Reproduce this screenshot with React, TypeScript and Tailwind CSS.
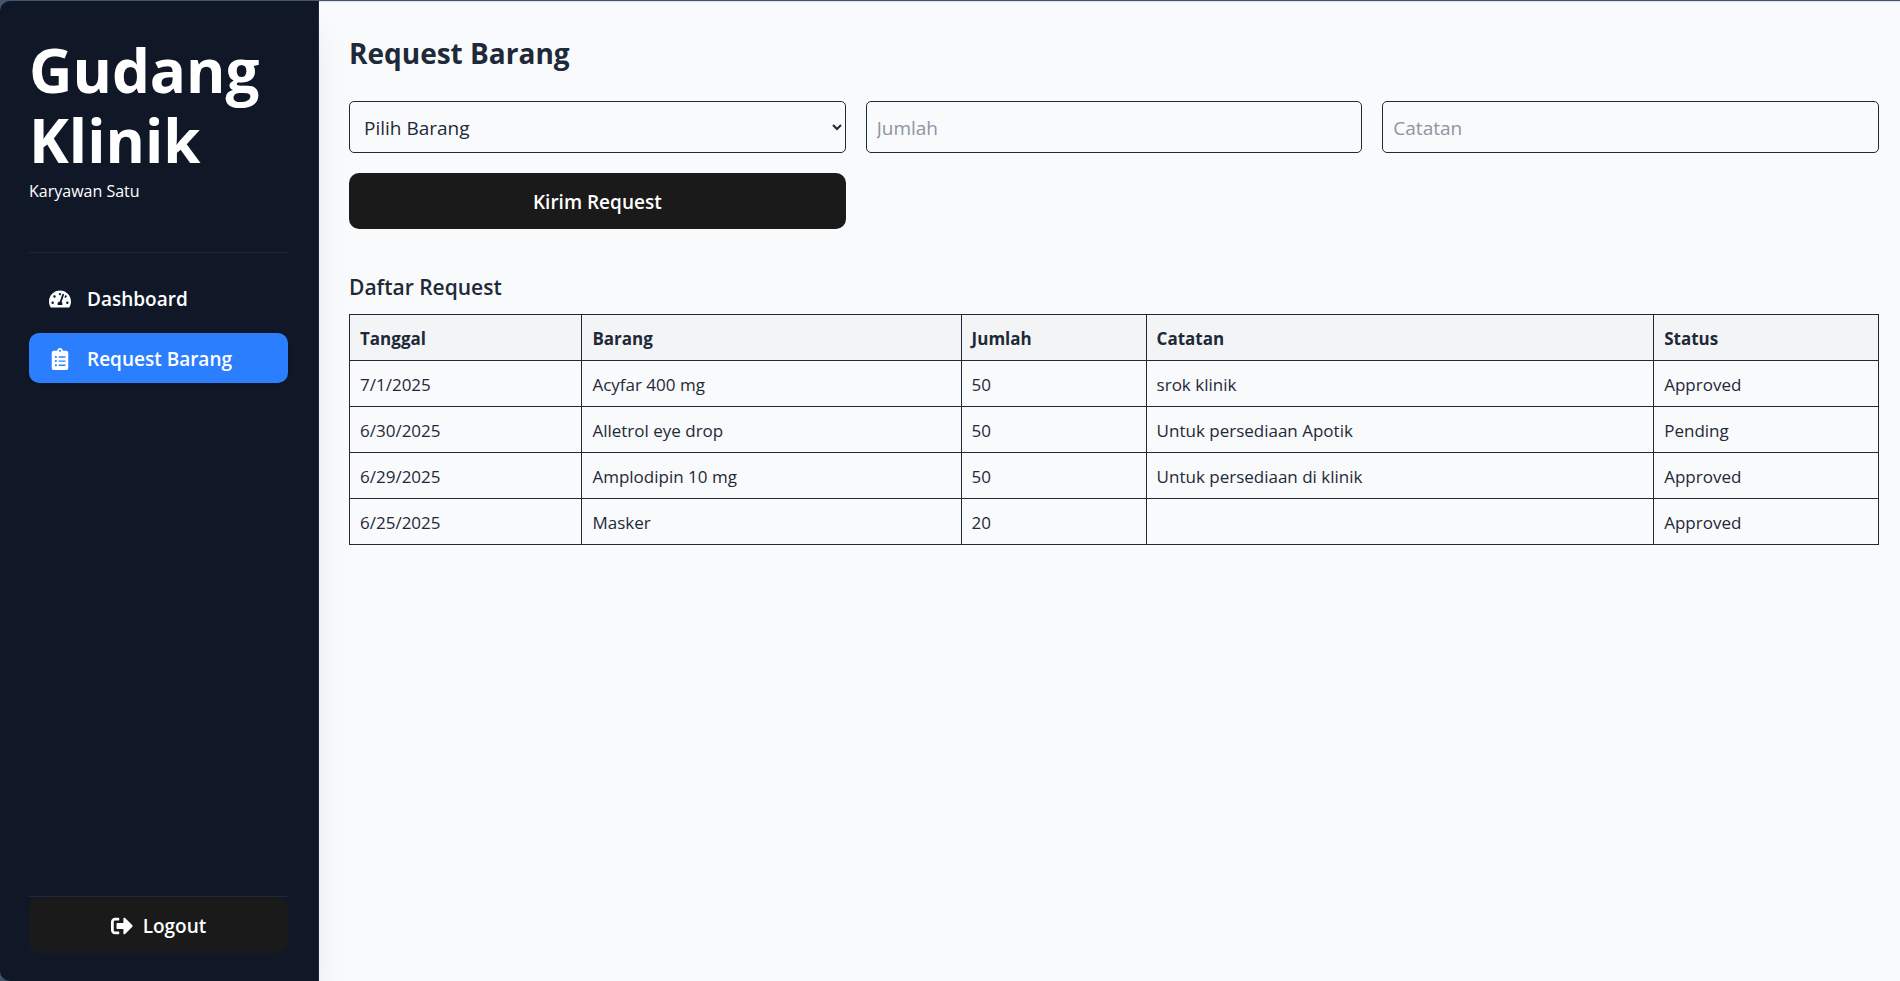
import { FaTachometerAlt, FaClipboardList, FaSignOutAlt } from "react-icons/fa";

const rows = [
  ["7/1/2025", "Acyfar 400 mg", "50", "srok klinik", "Approved"],
  ["6/30/2025", "Alletrol eye drop", "50", "Untuk persediaan Apotik", "Pending"],
  ["6/29/2025", "Amplodipin 10 mg", "50", "Untuk persediaan di klinik", "Approved"],
  ["6/25/2025", "Masker", "20", "", "Approved"],
];

function Sidebar() {
  return (
    <aside className="relative z-10 flex w-[319px] shrink-0 flex-col rounded-l-[10px] border-r border-[#1d293d] bg-[#101828] pr-[30px] pb-[28px] pl-[29px] text-white shadow-[0_25px_31px_-6px_rgba(0,0,0,0.1)]">
      <div className="border-b border-[#1e2939] pt-[34px] pb-[48px]">
        <h1 className="text-[60px] leading-[70px] font-bold">Gudang Klinik</h1>
        <p className="mt-[4px] text-[16px] leading-[25px]">Karyawan Satu</p>
      </div>
      <nav className="flex flex-1 flex-col gap-[10px] pt-[20px]">
        <a href="#dashboard" className="flex h-[50px] items-center gap-[16px] rounded-[10px] px-[20px] pt-[2px] text-[19px] font-semibold">
          <FaTachometerAlt className="size-[22px]" />
          Dashboard
        </a>
        <a href="#request" className="flex h-[50px] items-center gap-[16px] rounded-[10px] bg-[#2b7fff] px-[20px] pt-[2px] text-[19px] font-semibold shadow-sm">
          <FaClipboardList className="size-[22px]" />
          Request Barang
        </a>
      </nav>
      <div className="border-t border-[#1e2939]">
        <button type="button" className="flex h-[56px] w-full items-center justify-center gap-[10px] rounded-[10px] bg-[#1a1a1a] pt-[2px] text-[19px] font-semibold">
          <FaSignOutAlt className="size-[22px]" />
          Logout
        </button>
      </div>
    </aside>
  );
}

export default function App() {
  return (
    <div className="flex min-h-screen bg-[#45556c] pt-px font-['Open_Sans',sans-serif] text-[#1e2939]">
      <Sidebar />
      <main className="flex-1 border-t border-[#dcdff0] bg-[#f9fafb] pt-[28px] pr-[21px] pl-[30px]">
        <h2 className="text-[28px] leading-[46px] font-bold">Request Barang</h2>
        <form className="mt-[25px] grid grid-cols-3 gap-[20px] text-[19px]" onSubmit={(e) => e.preventDefault()}>
          <select aria-label="Pilih Barang" className="h-[52px] w-full rounded-[5px] border border-[#1e2939] px-[10px] pt-[2px]">
            <option>Pilih Barang</option>
          </select>
          <input aria-label="Jumlah" placeholder="Jumlah" className="h-[52px] w-full rounded-[5px] border border-[#1e2939] px-[10px] pt-[2px] placeholder:text-[#8e959f]" />
          <input aria-label="Catatan" placeholder="Catatan" className="h-[52px] w-full rounded-[5px] border border-[#1e2939] px-[10px] pt-[2px] placeholder:text-[#8e959f]" />
          <button type="submit" className="h-[56px] rounded-[10px] bg-[#1a1a1a] pt-[2px] font-semibold text-white">
            Kirim Request
          </button>
        </form>
        <h3 className="mt-[41px] text-[21px] leading-[35px] font-semibold">Daftar Request</h3>
        <table className="mt-[9px] w-full table-fixed border-collapse text-left text-[17px] leading-[25px]">
          <colgroup>
            <col className="w-[15.2%]" />
            <col className="w-[24.8%]" />
            <col className="w-[12.1%]" />
            <col className="w-[33.2%]" />
            <col className="w-[14.7%]" />
          </colgroup>
          <thead className="bg-[#f3f4f6]">
            <tr>
              {["Tanggal", "Barang", "Jumlah", "Catatan", "Status"].map((h) => (
                <th key={h} scope="col" className="border border-[#1e2939] px-[10px] pt-[11px] pb-[9px] font-bold">{h}</th>
              ))}
            </tr>
          </thead>
          <tbody>
            {rows.map((row) => (
              <tr key={row[0]}>
                {row.map((cell, i) => (
                  <td key={i} className="border border-[#1e2939] px-[10px] pt-[11px] pb-[9px]">{cell}</td>
                ))}
              </tr>
            ))}
          </tbody>
        </table>
      </main>
    </div>
  );
}
